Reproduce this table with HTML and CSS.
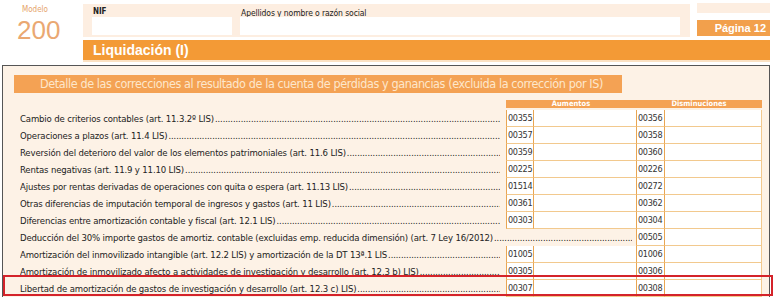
FILE: index.html
```html
<!DOCTYPE html>
<html lang="es">
<head>
<meta charset="utf-8">
<link rel="stylesheet" href="styles.css">
</head>
<body>
<div class="page">
  <div class="top">
    <div class="modelo">
      <div class="modelo-label">Modelo</div>
      <div class="modelo-num">200</div>
    </div>
    <div class="top-main">
      <div class="top-row">
        <div class="ident">
          <div class="field nif">
            <div class="field-label nif-label">NIF</div>
            <div class="field-input"></div>
          </div>
          <div class="field name">
            <div class="field-label">Apellidos y nombre o razón social</div>
            <div class="field-input"></div>
          </div>
        </div>
        <div class="pag">
          <div class="pag-top"></div>
          <div class="pag-label">Página 12</div>
        </div>
      </div>
      <div class="section-bar">Liquidación (I)</div>
    </div>
  </div>

  <div class="box">
    <div class="box-title">Detalle de las correcciones al resultado de la cuenta de pérdidas y ganancias (excluida la corrección por IS)</div>
    <div class="grid">
      <div class="hdr-spacer"></div>
      <div class="hdr">Aumentos</div>
      <div class="hdr">Disminuciones</div>

      <div class="label"><span>Cambio de criterios contables (art. 11.3.2º LIS)</span><span class="dots"></span></div>
      <div class="code">00355</div><div class="inp"></div><div class="code">00356</div><div class="inp last"></div>

      <div class="label"><span>Operaciones a plazos (art. 11.4 LIS)</span><span class="dots"></span></div>
      <div class="code">00357</div><div class="inp"></div><div class="code">00358</div><div class="inp last"></div>

      <div class="label"><span>Reversión del deterioro del valor de los elementos patrimoniales (art. 11.6 LIS)</span><span class="dots"></span></div>
      <div class="code">00359</div><div class="inp"></div><div class="code">00360</div><div class="inp last"></div>

      <div class="label"><span>Rentas negativas (art. 11.9 y 11.10 LIS)</span><span class="dots"></span></div>
      <div class="code">00225</div><div class="inp"></div><div class="code">00226</div><div class="inp last"></div>

      <div class="label"><span>Ajustes por rentas derivadas de operaciones con quita o espera (art. 11.13 LIS)</span><span class="dots"></span></div>
      <div class="code">01514</div><div class="inp"></div><div class="code">00272</div><div class="inp last"></div>

      <div class="label"><span>Otras diferencias de imputación temporal de ingresos y gastos (art. 11 LIS)</span><span class="dots"></span></div>
      <div class="code">00361</div><div class="inp"></div><div class="code">00362</div><div class="inp last"></div>

      <div class="label"><span>Diferencias entre amortización contable y fiscal (art. 12.1 LIS)</span><span class="dots"></span></div>
      <div class="code">00303</div><div class="inp"></div><div class="code">00304</div><div class="inp last"></div>

      <div class="label wide"><span>Deducción del 30% importe gastos de amortiz. contable (excluidas emp. reducida dimensión) (art. 7 Ley 16/2012)</span><span class="dots"></span></div>
      <div class="code">00505</div><div class="inp last"></div>

      <div class="label"><span>Amortización del inmovilizado intangible (art. 12.2 LIS) y amortización de la DT 13ª.1 LIS</span><span class="dots"></span></div>
      <div class="code">01005</div><div class="inp"></div><div class="code">01006</div><div class="inp last"></div>

      <div class="label"><span>Amortización de inmovilizado afecto a actividades de investigación y desarrollo (art. 12.3 b) LIS)</span><span class="dots"></span></div>
      <div class="code">00305</div><div class="inp"></div><div class="code">00306</div><div class="inp last"></div>

      <div class="label"><span>Libertad de amortización de gastos de investigación y desarrollo (art. 12.3 c) LIS)</span><span class="dots"></span></div>
      <div class="code">00307</div><div class="inp"></div><div class="code">00308</div><div class="inp last"></div>
    </div>
  </div>
  <div class="highlight"></div>
</div>
</body>
</html>
```

FILE: styles.css
```css
* { box-sizing: border-box; }
html, body { margin: 0; padding: 0; background: #fff; }
body {
  width: 775px;
  height: 297px;
  overflow: hidden;
  font-family: "DejaVu Sans Condensed", "DejaVu Sans", sans-serif;
  font-stretch: condensed;
  color: #222;
}
.page { position: relative; width: 775px; height: 297px; }

.top { display: flex; padding-top: 3px; }
.modelo { width: 83px; display: flex; flex-direction: column; padding-left: 17px; }
.modelo-label { font-size: 8px; color: #e6a46a; padding-left: 5px; line-height: 10px; padding-top: 2px; }
.modelo-num { font-family: "Liberation Sans", sans-serif; font-size: 26px; line-height: 26px; color: #eaa872; margin-top: 2px; }

.top-main { width: 687px; display: flex; flex-direction: column; }
.top-row { display: flex; gap: 7px; height: 34px; }
.ident {
  width: 607px;
  background: #fdeee1;
  margin-top: 1px;
  display: flex;
  gap: 8px;
  padding: 0 10px 2px 9px;
}
.field { display: flex; flex-direction: column; }
.nif { width: 140px; }
.name { flex: 1; }
.field-label { font-size: 8.5px; line-height: 12px; height: 13px; padding-top: 3px; padding-left: 1px; letter-spacing: -0.1px; }
.nif-label { font-weight: bold; font-size: 8px; padding-top: 2px; }
.field-input { flex: 1; background: #fff; }

.pag { width: 73px; display: flex; flex-direction: column; gap: 7px; }
.pag-top { height: 10px; background: #fdeee1; }
.pag-label {
  height: 16px;
  background: #f2a04c;
  color: #fff;
  font-family: "Liberation Sans", sans-serif;
  font-weight: bold;
  font-size: 11px;
  line-height: 16px;
  text-align: right;
  padding-right: 4px;
}

.section-bar {
  margin-top: 3px;
  height: 20px;
  background: #f39a36;
  color: #fff;
  font-family: "Liberation Sans", sans-serif;
  font-weight: bold;
  font-size: 14px;
  line-height: 20px;
  padding-left: 10px;
  border-bottom: 2px solid #fbe1c2;
  box-sizing: content-box;
}

.box {
  margin: 3px 0 0 2px;
  width: 768px;
  height: 240px;
  border: 1px solid #555;
  border-bottom: none;
  background: #fdf2e6;
  padding: 9px 6px 0 11px;
}
.box-title {
  width: 608px;
  height: 18px;
  background: #f4a254;
  color: #fde7cc;
  font-size: 12.5px;
  letter-spacing: -0.4px;
  line-height: 18px;
  padding-left: 26px;
  white-space: nowrap;
  overflow: hidden;
}

.grid {
  margin-top: 7px;
  display: grid;
  grid-template-columns: 6px 486px 28px 102px 29px 97px;
  grid-template-rows: 10px;
  grid-auto-rows: 17px;
}
.grid > .hdr-spacer { grid-column: 1 / span 2; height: 8px; }
.grid .hdr {
  height: 8px;
  background: #f4a254;
  color: #fff;
  font-weight: bold;
  font-size: 7.5px;
  line-height: 8px;
  text-align: center;
  grid-column: span 2;
}
.label {
  grid-column: 2;
  display: flex;
  align-items: center;
  font-size: 9.5px;
  letter-spacing: -0.15px;
  white-space: nowrap;
  overflow: hidden;
  padding-right: 6px;
  color: #222;
}
.label.wide { grid-column: 2 / span 3; padding-right: 4px; }
.label span:first-child { flex: none; }
.dots { flex: 1; overflow: hidden; font-size: 9px; letter-spacing: 0; color: #111; margin-left: 1px; }
.dots::after { content: "......................................................................................................................................................................................................................................................."; }

.code {
  background: #fff;
  border-left: 1px solid #e9a653;
  border-right: 1px solid #e9a653;
  border-bottom: 1px solid #f2c98e;
  font-size: 9px;
  letter-spacing: -0.3px;
  line-height: 16px;
  padding-left: 1px;
  color: #333;
  overflow: hidden;
  white-space: nowrap;
}
.inp { background: #fff; border-bottom: 1px solid #f2c98e; }
.inp.last { border-right: 1px solid #f2c98e; }

.highlight {
  position: absolute;
  left: 3px;
  top: 275px;
  width: 770px;
  height: 21px;
  border: 2px solid #d4232a;
}
```
